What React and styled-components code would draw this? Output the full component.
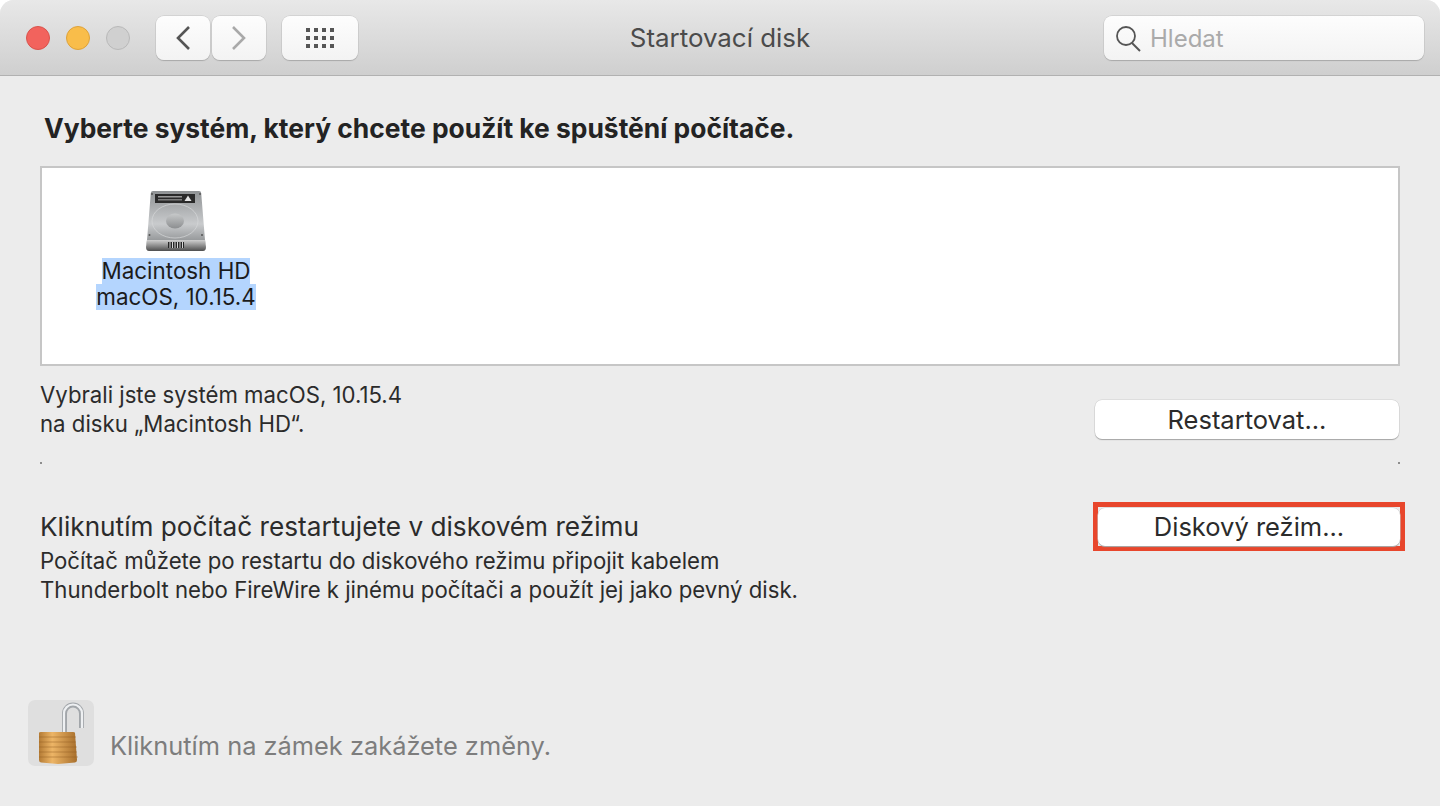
import React from "react";
import styled, { createGlobalStyle } from "styled-components";

const Global = createGlobalStyle`
  html, body {
    margin: 0;
    padding: 0;
    background: #fff;
  }
  body {
    font-family: Inter, "Noto Sans", sans-serif;
    color: #232323;
    -webkit-font-smoothing: antialiased;
  }
`;

const Window = styled.div`
  width: 1440px;
  height: 806px;
  display: flex;
  flex-direction: column;
  background: #ececec;
  border-radius: 14px 14px 0 0;
  overflow: hidden;
`;

const TitleBar = styled.header`
  flex: 0 0 76px;
  box-sizing: border-box;
  display: flex;
  align-items: center;
  padding: 1px 16px 0 26px;
  background: linear-gradient(#e8e8e8, #cfcfcf);
  border-bottom: 1px solid #b1b1b1;
  position: relative;
`;

const Light = styled.span`
  width: 24px;
  height: 24px;
  box-sizing: border-box;
  border-radius: 50%;
  margin-right: 16px;
  background: ${p => p.$color};
  border: 1px solid ${p => p.$edge};
`;

const NavGroup = styled.div`
  display: flex;
  gap: 2px;
  margin-left: ${p => p.$left}px;
`;

const ToolButton = styled.button`
  width: ${p => p.$width}px;
  height: 44px;
  padding: 0;
  border: 0;
  border-radius: 8px;
  background: linear-gradient(#fdfdfd, #f3f3f3);
  box-shadow: 0 1px 1px #a9a9a9, 0 0 0 0.5px #c4c4c4;
  display: flex;
  align-items: center;
  justify-content: center;
`;

const Title = styled.h1`
  position: absolute;
  left: 0;
  right: 0;
  top: 23px;
  margin: 0;
  text-align: center;
  font-size: 25.9px;
  line-height: 30px;
  font-weight: 400;
  color: #4b4b4b;
`;

const Search = styled.div`
  margin-left: auto;
  width: 320px;
  height: 44px;
  box-sizing: border-box;
  display: flex;
  align-items: center;
  gap: 9px;
  padding-left: 11px;
  border-radius: 8px;
  background: linear-gradient(#fdfdfd, #f3f3f3);
  box-shadow: 0 1px 1px #a9a9a9, 0 0 0 0.5px #c4c4c4;
  font-size: 24px;
  color: #aaa;
`;

const Content = styled.main`
  flex: 1;
  display: flex;
  flex-direction: column;
  padding: 0 40px;
`;

const Heading = styled.h2`
  margin: 38px 0 24px 4px;
  font-size: 26.4px;
  line-height: 28px;
  font-weight: 700;
  color: #232323;
`;

const DiskList = styled.div`
  height: 200px;
  box-sizing: border-box;
  background: #fff;
  border: 2px solid #c6c6c6;
  padding: 22px 0 0 53px;
`;

const DiskItem = styled.div`
  width: 162px;
  display: flex;
  flex-direction: column;
  align-items: center;
`;

const DiskLabel = styled.div`
  margin-top: 6px;
  font-size: 22.4px;
  line-height: 26px;
  text-align: center;
  color: #1b1b1b;
  span {
    background: #b4d5fe;
    display: inline-block;
    white-space: nowrap;
  }
`;

const Row = styled.div`
  display: flex;
  justify-content: space-between;
  align-items: flex-start;
  margin-top: ${p => p.$top || 0}px;
`;

const Text = styled.p`
  margin: 0;
  font-size: 22.2px;
  line-height: 29px;
  color: #2b2b2b;
`;

const Button = styled.button`
  width: ${p => p.$width}px;
  height: ${p => p.$height}px;
  margin: ${p => p.$top || 0}px ${p => p.$right || 0}px 0 0;
  padding: 0;
  border: 0;
  border-radius: 7px;
  background: #fff;
  box-shadow: 0 1px 1px #a6a6a6, 0 0 0 0.5px #cfcfcf;
  font: 400 25.5px/1 Inter, sans-serif;
  color: #2b2b2b;
`;

const Dots = styled.div`
  display: flex;
  justify-content: space-between;
  height: 2px;
  margin: 23px 0 38px;
  i {
    width: 2px;
    height: 2px;
    background: #8d8d8d;
  }
`;

const Highlight = styled.div`
  border: 5px solid #e8462c;
  margin: 0 -5px 0 0;
  padding: 1px 0 0;
  height: 49px;
  box-sizing: border-box;
  background: #ececec;
`;

const SubHeading = styled.p`
  margin: 10px 0 4px;
  font-size: 26.2px;
  line-height: 30px;
  color: #2b2b2b;
`;

const Footer = styled.footer`
  flex: 0 0 auto;
  margin: auto 0 40px -12px;
  display: flex;
  align-items: flex-end;
  gap: 16px;
`;

const LockTile = styled.div`
  width: 66px;
  height: 66px;
  box-sizing: border-box;
  padding-left: 10px;
  border-radius: 7px;
  background: #dfdfdf;
`;

const LockText = styled.span`
  font-size: 25.4px;
  line-height: 28px;
  color: #7d7d7d;
  margin-bottom: 6px;
`;

const HardDisk = () => (
  <svg width="60" height="62" viewBox="0 0 60 62">
    <defs>
      <linearGradient id="hdBody" x1="0" y1="0" x2="0" y2="1">
        <stop offset="0" stopColor="#8f9294" />
        <stop offset="0.6" stopColor="#c9cbcd" />
        <stop offset="1" stopColor="#85888a" />
      </linearGradient>
      <linearGradient id="hdBase" x1="0" y1="0" x2="0" y2="1">
        <stop offset="0" stopColor="#d0d0d0" />
        <stop offset="1" stopColor="#4e4e4e" />
      </linearGradient>
      <linearGradient id="hdHub" x1="0" y1="0" x2="0" y2="1">
        <stop offset="0" stopColor="#c7c9ca" />
        <stop offset="1" stopColor="#8c8e90" />
      </linearGradient>
    </defs>
    <path d="M7 1h46q2 0 2.200 2L59 50q.6 6-1 6H2q-1.600 0-1-6L4.800 3Q5 1 7 1z" fill="url(#hdBody)" />
    <path d="M.8 50h58.400l.8 7q0 4-3 4H3q-3 0-3-4z" fill="url(#hdBase)" />
    <ellipse cx="29" cy="31" rx="23" ry="17" fill="none" stroke="#d6d7d8" strokeOpacity="0.7" strokeWidth="1" />
    <ellipse cx="29" cy="31" rx="9" ry="7.500" fill="url(#hdHub)" />
    <rect x="9" y="4" width="40" height="9" fill="#2a2a2a" />
    <rect x="12" y="6" width="24" height="1.500" fill="#9b9b9b" />
    <rect x="12" y="9" width="24" height="1.500" fill="#7c7c7c" />
    <path d="M42 5.500l3.500 5.500h-7z" fill="#e6e6e6" />
    <path d="M22 52h16v6H22z" fill="#262626" />
    <path d="M24 52v6M26.500 52v6M29 52v6M31.500 52v6M34 52v6M36.500 52v6" stroke="#d8d8d8" strokeWidth="1" />
    <circle cx="6" cy="4" r="1" fill="#555" />
    <circle cx="54" cy="4" r="1" fill="#555" />
    <circle cx="3.500" cy="45" r="1" fill="#555" />
    <circle cx="56" cy="45" r="1" fill="#555" />
  </svg>
);

const Padlock = () => (
  <svg width="50" height="66" viewBox="0 0 50 66">
    <defs>
      <linearGradient id="brass" x1="0" y1="0" x2="1" y2="0">
        <stop offset="0" stopColor="#b47b35" />
        <stop offset="0.35" stopColor="#edb566" />
        <stop offset="1" stopColor="#a86f2c" />
      </linearGradient>
    </defs>
    <path d="M26.500 33V13.500a8.500 8.500 0 0 1 17 0V28" fill="none" stroke="#a2a6aa" strokeWidth="5" />
    <path d="M26 33V13.500a9 9 0 0 1 18 0V28" fill="none" stroke="#eef0f2" strokeWidth="2.200" />
    <path d="M1 33q0-1 2-1h32q2 0 2 1l2 27q0 2-2 2.500L20 64 3 62.500q-2-.5-2-2.500z" fill="url(#brass)" />
    <path d="M1 37h37M1 42h37M1 47h38M1 52h38M1 57h39" stroke="#8e5a22" strokeOpacity="0.45" strokeWidth="1" />
  </svg>
);

const App = () => (
  <>
    <Global />
    <Window>
      <TitleBar>
        <Light $color="#f2635d" $edge="#d9534c" />
        <Light $color="#f9bd4a" $edge="#dea23a" />
        <Light $color="#d0d0d0" $edge="#b9b9b9" />
        <NavGroup $left={10}>
          <ToolButton $width={54}>
            <svg width="16" height="26" viewBox="0 0 16 26"><path d="M14 2L3 13l11 11" fill="none" stroke="#555" strokeWidth="2.600" /></svg>
          </ToolButton>
          <ToolButton $width={54}>
            <svg width="16" height="26" viewBox="0 0 16 26"><path d="M2 2l11 11L2 24" fill="none" stroke="#a9a9a9" strokeWidth="2.600" /></svg>
          </ToolButton>
        </NavGroup>
        <NavGroup $left={16}>
          <ToolButton $width={76}>
            <svg width="29" height="20" viewBox="0 0 29 20" fill="#555">
              {[0, 8, 16].map(y =>
                [0, 8, 16, 24].map(x => <rect key={`${x}-${y}`} x={x} y={y} width="4" height="4" />)
              )}
            </svg>
          </ToolButton>
        </NavGroup>
        <Title>Startovací disk</Title>
        <Search>
          <svg width="26" height="28" viewBox="0 0 26 28">
            <circle cx="11" cy="12" r="9" fill="none" stroke="#555" strokeWidth="1.800" />
            <path d="M17 19l8 8" stroke="#555" strokeWidth="2" />
          </svg>
          Hledat
        </Search>
      </TitleBar>
      <Content>
        <Heading>Vyberte systém, který chcete použít ke spuštění počítače.</Heading>
        <DiskList>
          <DiskItem>
            <HardDisk />
            <DiskLabel>
              <span>Macintosh HD</span>
              <br />
              <span>macOS, 10.15.4</span>
            </DiskLabel>
          </DiskItem>
        </DiskList>
        <Row $top={14}>
          <Text>
            Vybrali jste systém macOS, 10.15.4
            <br />
            na disku „Macintosh HD“.
          </Text>
          <Button $width={304} $height={39} $top={20} $right={1}>Restartovat...</Button>
        </Row>
        <Dots>
          <i />
          <i />
        </Dots>
        <Row>
          <div>
            <SubHeading>Kliknutím počítač restartujete v diskovém režimu</SubHeading>
            <Text>
              Počítač můžete po restartu do diskového režimu připojit kabelem
              <br />
              Thunderbolt nebo FireWire k jinému počítači a použít jej jako pevný disk.
            </Text>
          </div>
          <Highlight>
            <Button $width={302} $height={38}>Diskový režim...</Button>
          </Highlight>
        </Row>
        <Footer>
          <LockTile>
            <Padlock />
          </LockTile>
          <LockText>Kliknutím na zámek zakážete změny.</LockText>
        </Footer>
      </Content>
    </Window>
  </>
);

export default App;
